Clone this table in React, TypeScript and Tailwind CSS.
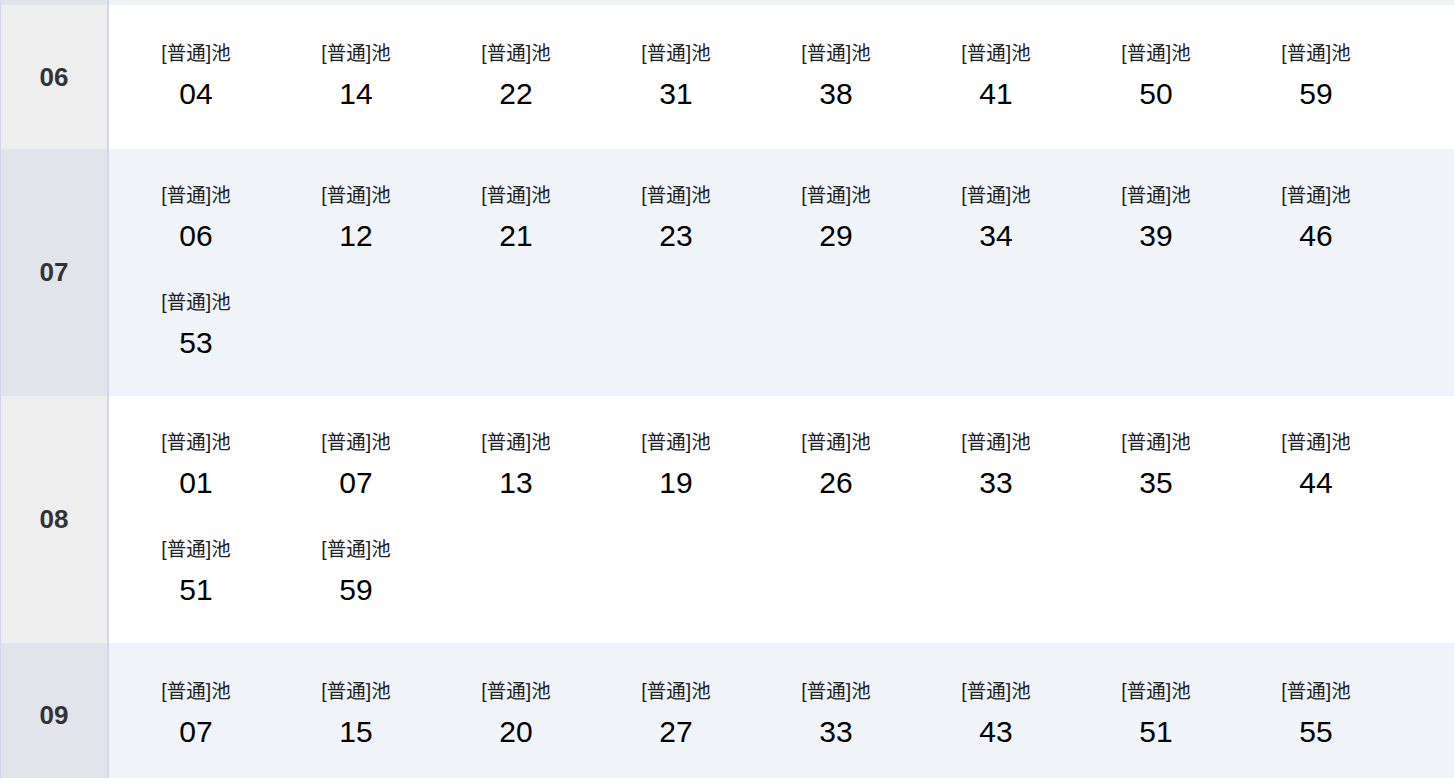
import React from "react";

const rows: { hour: string; mins: string[]; alt: boolean }[] = [
  { hour: "06", mins: ["04", "14", "22", "31", "38", "41", "50", "59"], alt: false },
  { hour: "07", mins: ["06", "12", "21", "23", "29", "34", "39", "46", "53"], alt: true },
  { hour: "08", mins: ["01", "07", "13", "19", "26", "33", "35", "44", "51", "59"], alt: false },
  { hour: "09", mins: ["07", "15", "20", "27", "33", "43", "51", "55"], alt: true },
];

function Item({ m }: { m: string }) {
  return (
    <div className="w-[160px] h-[107px] pt-[17px] flex flex-col items-center">
      <div
        className="h-[24px] leading-[24px] text-[19.5px] text-[#222]"
        style={{ fontFamily: '"Liberation Sans", "Noto Sans CJK JP", sans-serif' }}
      >
        [普通]池
      </div>
      <div
        className="mt-[11px] h-[36px] leading-[36px] text-[30px] text-black"
        style={{ fontFamily: '"Liberation Sans", Arial, sans-serif' }}
      >
        {m}
      </div>
    </div>
  );
}

export default function App() {
  return (
    <div className="w-[1454px] h-[778px] overflow-hidden bg-white font-['Liberation_Sans',sans-serif]">
      <div className="flex h-[5px]">
        <div className="w-[109px] shrink-0 bg-[#e1e4ea] border-l border-l-[#d4d4ee] border-r-2 border-r-[#d4d4ee]" />
        <div className="flex-1 bg-[#f0f3f8]" />
      </div>
      {rows.map((r) => (
        <div key={r.hour} className="flex min-h-[144px]">
          <div
            className={`w-[109px] shrink-0 flex items-center justify-center border-l border-l-[#d4d4ee] border-r-2 border-r-[#d4d4ee] ${
              r.alt ? "bg-[#e1e4ea]" : "bg-[#eeeeee]"
            }`}
          >
            <span className="text-[26px] font-bold text-[#333]">{r.hour}</span>
          </div>
          <div
            className={`flex-1 flex flex-wrap content-center pl-[7px] pt-[17px] pb-[16px] ${
              r.alt ? "bg-[#f0f3f8]" : "bg-white"
            }`}
          >
            {r.mins.map((m, i) => (
              <Item key={i} m={m} />
            ))}
          </div>
        </div>
      ))}
    </div>
  );
}
